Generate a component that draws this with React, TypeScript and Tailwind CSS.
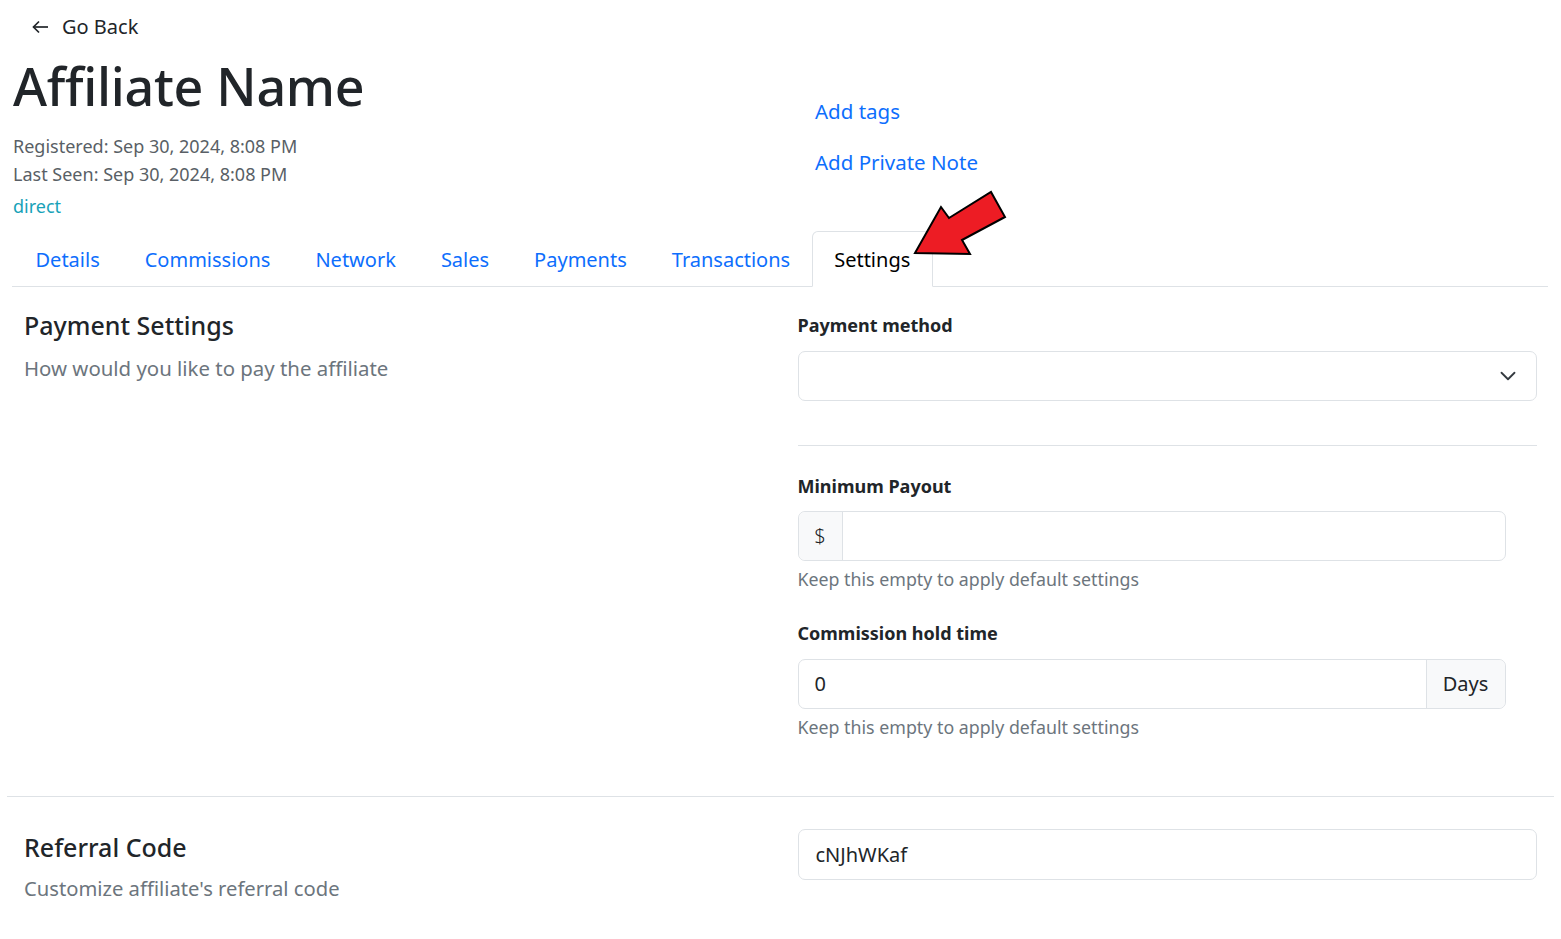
import { ChevronDown } from "lucide-react";

const tabs = ["Details", "Commissions", "Network", "Sales", "Payments", "Transactions", "Settings"];

function PointerArrow() {
  return (
    <svg
      className="absolute left-[895px] top-[180px] pointer-events-none"
      width="125"
      height="90"
      viewBox="895 180 125 90"
    >
      <polygon
        points="915,253 941,207 949,218 991,192 1005,217 962,240 970,254"
        fill="#ed1c24"
        stroke="#000"
        strokeWidth="2"
        strokeLinejoin="miter"
      />
    </svg>
  );
}

function BackArrow() {
  return (
    <svg width="17" height="14" viewBox="0 0 17 14" fill="none" stroke="#212529" strokeWidth="1.7">
      <path d="M16 7H1.5" />
      <path d="M7 1.5L1.5 7L7 12.5" strokeLinejoin="miter" />
    </svg>
  );
}

function Label({ children }: { children: React.ReactNode }) {
  return <div className="h-[27px] text-[18px] leading-[27px] font-bold text-[#212529]">{children}</div>;
}

function Help({ children }: { children: React.ReactNode }) {
  return <div className="mt-[5px] h-[27px] text-[17.8px] leading-[27px] text-[#6c757d]">{children}</div>;
}

export default function App() {
  return (
    <div
      className="relative min-h-screen bg-white text-[#212529]"
      style={{ fontFamily: '"Noto Sans", "Open Sans", sans-serif' }}
    >
      {/* header */}
      <div className="flex">
        <div className="w-[815px] pl-[13px]">
          <button className="mt-[13px] ml-[19px] flex h-[28px] items-center gap-[13px] text-[20px] text-[#212529]">
            <BackArrow />
            <span>Go Back</span>
          </button>
          <h1 className="mt-[12px] h-[66px] text-[52px] leading-[66px] font-medium tracking-[-0.3px]">Affiliate Name</h1>
          <div className="mt-[13px] text-[18px] leading-[28px] text-[#595f66]">
            <div>Registered: Sep 30, 2024, 8:08 PM</div>
            <div>Last Seen: Sep 30, 2024, 8:08 PM</div>
          </div>
          <div className="mt-[4px] text-[18px] leading-[28px] text-[#17a2b8]">direct</div>
        </div>
        <div className="pt-[96px] text-[20.5px] leading-[30px] text-[#0d6efd]">
          <div>Add tags</div>
          <div className="mt-[21px]">Add Private Note</div>
        </div>
      </div>

      {/* tabs */}
      <div className="mx-[12px] mt-[11px] flex border-b border-[#dee2e6] w-[1536px]">
        {tabs.map((t) =>
          t === "Settings" ? (
            <div
              key={t}
              className="-mb-px h-[56px] rounded-t-[6px] border border-b-white border-[#dee2e6] bg-white px-[21.5px] text-[20px] leading-[56px] text-black"
            >
              {t}
            </div>
          ) : (
            <div key={t} className="h-[55px] border border-transparent pl-[22.5px] pr-[20.5px] text-[20px] leading-[55px] text-[#0d6efd]">
              {t}
            </div>
          )
        )}
      </div>
      <PointerArrow />

      {/* payment settings */}
      <div className="mx-[7px] flex border-b border-[#dee2e6] pb-[55px]">
        <div className="w-1/2 px-[17px] pt-[22px]">
          <h3 className="text-[25px] leading-[32px] font-medium text-[#212529]">Payment Settings</h3>
          <p className="mt-[12px] text-[20.4px] leading-[30px] text-[#6c757d]">How would you like to pay the affiliate</p>
        </div>
        <div className="w-1/2 px-[17px] pt-[25px]">
          <Label>Payment method</Label>
          <div className="mt-[12px] flex h-[50px] items-center justify-end rounded-[7px] border border-[#dee2e6] pr-[15px]">
            <ChevronDown size={26} strokeWidth={1.7} className="text-[#343a40]" />
          </div>
          <div className="mt-[44px] h-px bg-[#dee2e6]" />
          <div className="mt-[27px]">
            <Label>Minimum Payout</Label>
          </div>
          <div className="mt-[11px] flex h-[50px] w-[708px] rounded-[7px] border border-[#dee2e6]">
            <div className="flex w-[44px] items-center justify-center rounded-l-[7px] border-r border-[#dee2e6] bg-[#f8f9fa] text-[20px] font-light">
              $
            </div>
            <div className="flex-1" />
          </div>
          <Help>Keep this empty to apply default settings</Help>
          <div className="mt-[27px]">
            <Label>Commission hold time</Label>
          </div>
          <div className="mt-[12px] flex h-[50px] w-[708px] rounded-[7px] border border-[#dee2e6]">
            <div className="flex flex-1 items-center pl-[16px] text-[20px]">0</div>
            <div className="flex w-[79px] items-center justify-center rounded-r-[7px] border-l border-[#dee2e6] bg-[#f8f9fa] text-[20px]">
              Days
            </div>
          </div>
          <Help>Keep this empty to apply default settings</Help>
        </div>
      </div>

      {/* referral code */}
      <div className="mx-[7px] flex pb-[40px]">
        <div className="w-1/2 px-[17px] pt-[34px]">
          <h3 className="text-[25px] leading-[32px] font-medium text-[#212529]">Referral Code</h3>
          <p className="mt-[10px] text-[20.2px] leading-[30px] text-[#6c757d]">Customize affiliate's referral code</p>
        </div>
        <div className="w-1/2 px-[17px] pt-[32px]">
          <div className="flex h-[51px] items-center rounded-[7px] border border-[#dee2e6] pl-[17px] text-[20px]">
            cNJhWKaf
          </div>
        </div>
      </div>
    </div>
  );
}
